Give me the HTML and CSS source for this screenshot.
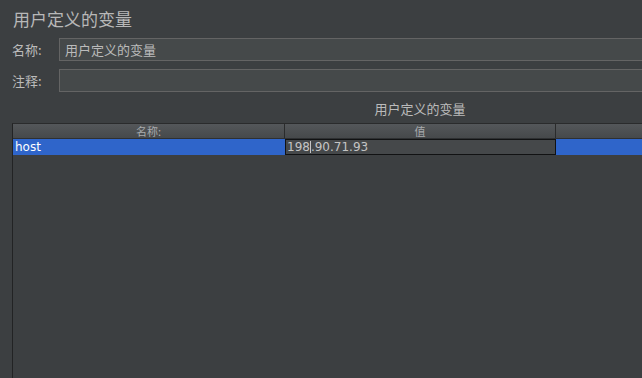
FILE: index.html
```html
<!DOCTYPE html>
<html lang="zh-CN">
<head>
  <meta charset="UTF-8" />
  <title>用户定义的变量</title>
  <link rel="stylesheet" href="styles.css">
</head>
<body>

  <h1 class="title">用户定义的变量</h1>

  <div class="field">
    <label>名称:</label>
    <div class="input">用户定义的变量</div>
  </div>

  <div class="field">
    <label>注释:</label>
    <div class="input"></div>
  </div>

  <div class="panel">
    <div class="panel-inner">
      <div class="caption">用户定义的变量</div>
      <div class="table">
        <div class="thead">
          <div class="th">名称:</div>
          <div class="th">值</div>
          <div class="th"></div>
        </div>
        <div class="row">
          <div class="cell">host</div>
          <div class="cell editor">198<span class="caret"></span>.90.71.93</div>
          <div class="cell"></div>
        </div>
      </div>
    </div>
  </div>

</body>
</html>
```

FILE: styles.css
```css
html, body {
  height: 100%;
}

body {
  margin: 0;
  padding: 9px 0 0 12px;
  box-sizing: border-box;
  background: #3c3f41;
  color: #bbbbbb;
  font-family: "Noto Sans CJK SC", "DejaVu Sans", sans-serif;
  overflow: hidden;
  display: flex;
  flex-direction: column;
}

.title {
  margin: 0 0 9px 1px;
  font-size: 17px;
  font-weight: normal;
  line-height: 20px;
  color: #b8b8b8;
}

.field {
  display: flex;
  align-items: center;
  height: 23px;
  margin-bottom: 8px;
  overflow: hidden;
}

.field label {
  width: 47px;
  flex-shrink: 0;
  font-size: 13px;
}

.input {
  flex: 1;
  height: 21px;
  margin-right: -10px;
  background: #45494a;
  border: 1px solid #646464;
  padding-left: 5px;
  font-size: 13px;
  line-height: 21px;
  color: #bbbbbb;
}

.panel {
  flex: 1;
  overflow: hidden;
  display: flex;
}

.panel-inner {
  flex-shrink: 0;
  width: 816px;
  display: flex;
  flex-direction: column;
}

.caption {
  text-align: center;
  font-size: 13px;
  line-height: 16px;
  margin: 1px 0 6px;
}

.table {
  flex: 1;
  border-top: 1px solid #2a2b2c;
  border-left: 1px solid #222324;
}

.thead {
  display: flex;
  height: 14px;
  background: linear-gradient(#54575a, #46494b);
  border-bottom: 1px solid #2e3032;
}

.th {
  width: 271px;
  border-right: 1px solid #2a2b2c;
  text-align: center;
  font-size: 11px;
  line-height: 14px;
  color: #a9abad;
}

.th:nth-child(2) {
  width: 270px;
}

.row {
  display: flex;
  height: 16px;
  background: #2f65ca;
}

.cell {
  width: 271px;
  padding-left: 2px;
  font-family: "DejaVu Sans", sans-serif;
  font-size: 12px;
  line-height: 16px;
  color: #ffffff;
}

.editor {
  width: 269px;
  height: 14px;
  padding-left: 1px;
  border: 1px solid #111213;
  background: #45484a;
  color: #c4c4c4;
  line-height: 14px;
}

.caret {
  display: inline-block;
  width: 1px;
  height: 12px;
  vertical-align: -2px;
  background: #c4c4c4;
}
```
